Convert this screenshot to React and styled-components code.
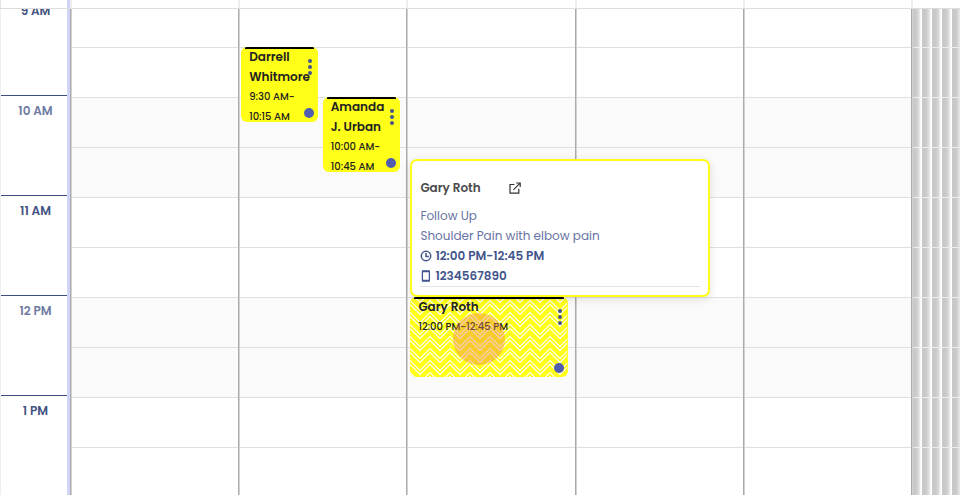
import React from 'react'
import styled, { createGlobalStyle, css } from 'styled-components';

const GlobalStyle = createGlobalStyle`
  * {
    box-sizing: border-box;
  }

  body {
    margin: 0;
    background: #fff;
    font-family: Poppins, Inter, "Open Sans", sans-serif;
  }
`;

const StyledCalendar = styled.main`
  height: 100vh;
  display: flex;
  flex-direction: column;
  overflow: hidden;
`;

const columns = css`
  display: grid;
  grid-template-columns: 70px repeat(5, 1fr) 49px;
`;

const StyledHeader = styled.header`
  ${columns}
  flex: 0 0 9px;
  border-bottom: 1px solid #ddd;
`;

const StyledHeaderCell = styled.div`
  border-left: 2px solid #eee;
`;

const StyledCorner = styled.div`
  border-left: 1px solid #e4e4e4;
  border-right: 3px solid #d0d5f7;
`;

const StyledBody = styled.div`
  ${columns}
  flex: 1;
  min-height: 0;
  overflow: hidden;
`;

const StyledTimes = styled.div`
  border-left: 1px solid #eee;
  border-right: 3px solid #d0d5f7;

  &::before {
    content: "";
    display: block;
    margin-top: -14px;
  }
`;

const StyledHour = styled.div`
  height: 100px;
  border-top: 1px solid #3d4f80;
  padding: 5px 0 0 3px;
  font-size: 12px;
  font-weight: 600;
  line-height: 20px;
  text-align: center;
  color: ${({ $even }) => ($even ? '#6f7ba3' : '#43537f')};
`;

const StyledDay = styled.section`
  position: relative;
  min-width: 0;
  border-left: 1px solid #aaa;
  box-shadow: inset 1px 0 #d2d2d2;
  background:
    linear-gradient(${({ $closed }) => ($closed ? '#eee' : '#e0e0e0')} 1px, transparent 1px) 0 -12px / 100% 50px,
    ${({ $closed }) => ($closed
    ? 'repeating-linear-gradient(90deg, #c8c6c6 0, #cbc9c9 4px, #dedede 7px, #fff 9px, #fff 10px)'
    : 'linear-gradient(#fff 100px, #fafafa 100px) 0 -12px / 100% 200px')};
`;

const StyledEvent = styled.article`
  position: absolute;
  top: ${({ $top }) => $top}px;
  left: ${({ $left }) => $left};
  width: ${({ $width }) => $width};
  height: ${({ $height }) => $height}px;
  padding: 0 8px;
  overflow: hidden;
  border-radius: 6px;
  background: #ffff17;
  color: #222;

  &::before {
    content: "";
    position: absolute;
    z-index: 1;
    top: 0;
    left: 4px;
    right: 4px;
    height: 2px;
    background: #000;
  }
`;

const StyledEventName = styled.h4`
  position: relative;
  margin: 0;
  font-size: 12px;
  font-weight: 600;
  line-height: 20px;
`;

const StyledEventTime = styled.p`
  position: relative;
  margin: 0;
  font-size: 10px;
  font-weight: 500;
  line-height: 20px;
  white-space: nowrap;
`;

const StyledMenuBtn = styled.button`
  position: absolute;
  top: 10px;
  right: 4px;
  width: 8px;
  height: 20px;
  padding: 0;
  border: none;
  background: none;
  color: #46538c;
  cursor: pointer;

  svg {
    display: block;
  }
`;

const StyledStatus = styled.span`
  position: absolute;
  right: 4px;
  bottom: 4px;
  width: 10px;
  height: 10px;
  border-radius: 50%;
  background: #515eb0;
`;

const StyledPattern = styled.svg`
  position: absolute;
  inset: 0;
  width: 100%;
  height: 100%;
`;

const StyledPress = styled.span`
  position: absolute;
  top: 16px;
  left: 43px;
  width: 52px;
  height: 52px;
  border-radius: 50%;
  background: rgba(233, 127, 80, 0.4);
`;

const StyledPopover = styled.aside`
  position: absolute;
  z-index: 2;
  top: 150px;
  left: 3px;
  width: 300px;
  padding: 17px 8px 8px;
  border: 2px solid #ffff17;
  border-radius: 7px;
  background: #fff;
  box-shadow: 0 2px 8px rgba(0, 0, 0, 0.12);
  font-size: 12px;
  line-height: 20px;
  color: #6674a3;
`;

const StyledPopoverHead = styled.div`
  display: flex;
  align-items: center;
  gap: 28px;
  margin-bottom: 8px;
`;

const StyledPopoverTitle = styled.h3`
  margin: 0;
  font-size: 12px;
  font-weight: 600;
  color: #4b4b4b;
`;

const StyledOpenLink = styled.a`
  display: flex;
  color: #333;
`;

const StyledNote = styled.p`
  margin: 0;
`;

const StyledDetail = styled.div`
  display: flex;
  align-items: center;
  gap: 3px;
  font-weight: 600;
  color: #43558c;
`;

const StyledRule = styled.hr`
  margin: 0;
  border: none;
  border-top: 1px solid #e4e4e4;
`;

const HOURS = ['9 AM', '10 AM', '11 AM', '12 PM', '1 PM'];

const EventTools = ({ name }) => (
  <>
    <StyledMenuBtn aria-label={`Options for ${name}`}>
      <svg width="8" height="20" fill="currentColor">
        <circle cx="4" cy="4" r="2" />
        <circle cx="4" cy="10" r="2" />
        <circle cx="4" cy="16" r="2" />
      </svg>
    </StyledMenuBtn>
    <StyledStatus />
  </>
);

const Zigzag = () => (
  <StyledPattern aria-hidden="true">
    <defs>
      <pattern id="zigzag" width="20" height="12" patternUnits="userSpaceOnUse">
        <path
          d="M-2 -10.5L10 1.5L22 -10.5M-2 -6.5L10 5.5L22 -6.5M-2 1.5L10 13.5L22 1.5M-2 5.5L10 17.5L22 5.5M-2 -0.5L0 1.5"
          fill="none"
          stroke="#fff"
          strokeWidth="1.1"
        />
      </pattern>
    </defs>
    <rect width="100%" height="100%" fill="url(#zigzag)" />
  </StyledPattern>
);

const ExternalIcon = () => (
  <svg width="12" height="12" viewBox="0 0 12 12" fill="none" stroke="currentColor" strokeWidth="1.2">
    <path d="M5.5 2.5H1V11.2H9.8V6.8M7.2 1H11.2V5M11 1.2L4.4 7.8" />
  </svg>
);

const ClockIcon = () => (
  <svg width="12" height="12" viewBox="0 0 12 12" fill="none" stroke="currentColor" strokeWidth="1.5">
    <circle cx="6" cy="6" r="4.7" />
    <path d="M6 3V6.4H8.8" />
  </svg>
);

const PhoneIcon = () => (
  <svg width="12" height="12" viewBox="0 0 12 12" fill="none" stroke="currentColor" strokeWidth="1.3">
    <rect x="2.4" y="0.8" width="7" height="10.4" rx="0.6" />
    <path d="M2.4 1.5H9.4M2.4 10.5H9.4" />
  </svg>
);

const AppointmentCard = () => (
  <StyledPopover>
    <StyledPopoverHead>
      <StyledPopoverTitle>Gary Roth</StyledPopoverTitle>
      <StyledOpenLink href="#patient" aria-label="Open patient">
        <ExternalIcon />
      </StyledOpenLink>
    </StyledPopoverHead>
    <StyledNote>Follow Up</StyledNote>
    <StyledNote>Shoulder Pain with elbow pain</StyledNote>
    <StyledDetail><ClockIcon />12:00 PM-12:45 PM</StyledDetail>
    <StyledDetail><PhoneIcon />1234567890</StyledDetail>
    <StyledRule />
  </StyledPopover>
);

const App = () => {
  return (<>
    <GlobalStyle />
    <StyledCalendar>
      <StyledHeader>
        <StyledCorner />
        <StyledHeaderCell />
        <StyledHeaderCell />
        <StyledHeaderCell />
        <StyledHeaderCell />
        <StyledHeaderCell />
        <StyledHeaderCell />
      </StyledHeader>
      <StyledBody>
        <StyledTimes>
          {HOURS.map((hour, i) => <StyledHour key={hour} $even={i % 2 === 1}>{hour}</StyledHour>)}
        </StyledTimes>
        <StyledDay />
        <StyledDay>
          <StyledEvent $top={38} $left="2px" $width="46%" $height={75}>
            <StyledEventName>Darrell<br />Whitmore</StyledEventName>
            <StyledEventTime>9:30 AM-<br />10:15 AM</StyledEventTime>
            <EventTools name="Darrell Whitmore" />
          </StyledEvent>
          <StyledEvent $top={88} $left="50%" $width="46%" $height={75}>
            <StyledEventName>Amanda<br />J. Urban</StyledEventName>
            <StyledEventTime>10:00 AM-<br />10:45 AM</StyledEventTime>
            <EventTools name="Amanda J. Urban" />
          </StyledEvent>
        </StyledDay>
        <StyledDay>
          <StyledEvent $top={288} $left="3px" $width="94%" $height={80}>
            <Zigzag />
            <StyledEventName>Gary Roth</StyledEventName>
            <StyledEventTime>12:00 PM-12:45 PM</StyledEventTime>
            <StyledPress />
            <EventTools name="Gary Roth" />
          </StyledEvent>
          <AppointmentCard />
        </StyledDay>
        <StyledDay />
        <StyledDay />
        <StyledDay $closed />
      </StyledBody>
    </StyledCalendar>
  </>);
}

export default App;
